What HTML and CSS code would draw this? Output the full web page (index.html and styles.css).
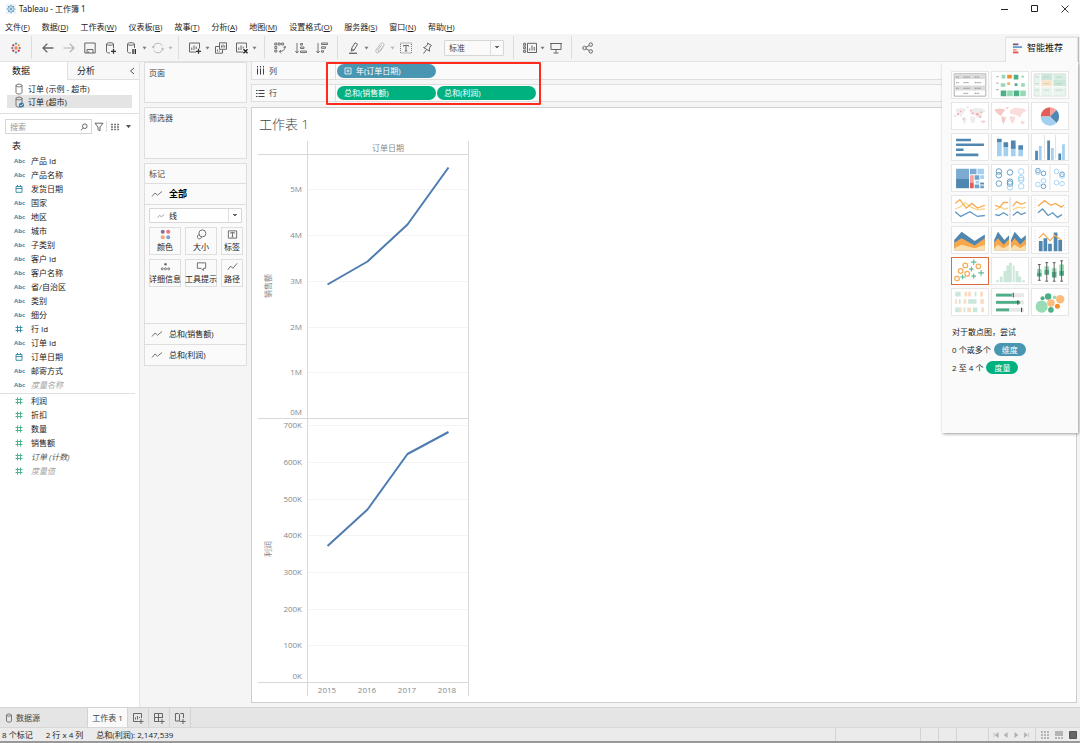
FILE: index.html
```html
<!DOCTYPE html>
<html lang="zh-CN">
<head>
<meta charset="utf-8">
<title>Tableau - 工作簿 1</title>
<link rel="stylesheet" href="styles.css">
</head>
<body>
<svg class="defs" aria-hidden="true">
  <symbol id="logo" viewBox="0 0 12 12"><path d="M6 4v4M4 6h4" stroke="#e8762c" stroke-width="1.2"/><path d="M6 .5v2.4M4.8 1.7h2.4" stroke="#5b879b"/><path d="M6 9.100v2.400M4.800 10.300h2.400" stroke="#5b879b"/><path d="M1.300 6h2M2.300 5v2" stroke="#5b6591"/><path d="M8.700 6h2M9.700 5v2" stroke="#5b6591"/><path d="M3.300 2.200v2.200M2.200 3.300h2.200M8.700 7.600v2.200M7.600 8.700h2.200" stroke="#c72035"/><path d="M8.700 2.200v2.200M7.600 3.300h2.200" stroke="#eb912c"/><path d="M3.300 7.600v2.200M2.200 8.700h2.200" stroke="#c72035"/></symbol>
  <symbol id="caret" viewBox="0 0 5 4"><path d="M.5.700h4L2.500 3.400z" fill="currentColor"/></symbol>
  <symbol id="db" viewBox="0 0 10 12"><path d="M2 2.500v7c0 2 6 2 6 0v-7M2 2.500c0-1.800 6-1.800 6 0s-6 1.800-6 0" fill="none" stroke="currentColor" stroke-width=".8"/></symbol>
  <symbol id="hash" viewBox="0 0 10 10"><path d="M3.500 1.500v7M6.500 1.500v7M1.500 3.500h7M1.500 6.500h7" stroke="currentColor" fill="none" stroke-width=".9"/></symbol>
  <symbol id="cal" viewBox="0 0 10 10"><path d="M2 2.500h6v5.800H2zM2 4.500h6M3.500 1v2M6.500 1v2" stroke="currentColor" fill="none" stroke-width=".9"/></symbol>
  <symbol id="line" viewBox="0 0 12 8"><path d="M1 6.500l3-3.500 2.500 2.200L11 1.500" stroke="currentColor" fill="none"/></symbol>
</svg>

<header class="titlebar">
  <svg class="applogo" viewBox="0 0 12 12"><rect width="12" height="12" fill="#eaf3f9"/><path d="M6 1v10M1 6h10M3.500 2.500v2M8.500 2.500v2M3.500 7.500v2M8.500 7.500v2M2.500 3.500h2M7.500 3.500h2M2.500 8.500h2M7.500 8.500h2" stroke="#2f7ba5" stroke-width="1" fill="none"/><circle cx="6" cy="6" r="2.200" fill="none" stroke="#eaf3f9" stroke-width=".8"/></svg>
  <span class="apptitle">Tableau - 工作簿 1</span>
  <div class="wincontrols">
    <button aria-label="最小化"><svg viewBox="0 0 10 10"><path d="M1 5.500h7" stroke="#222"/></svg></button>
    <button aria-label="最大化"><svg viewBox="0 0 10 10"><path d="M1.500 1.500h6v6h-6z" fill="none" stroke="#222"/></svg></button>
    <button aria-label="关闭"><svg viewBox="0 0 10 10"><path d="M1.500 1.500l7 7M8.500 1.500l-7 7" stroke="#222" stroke-width=".9"/></svg></button>
  </div>
</header>

<nav class="menubar">
  <button>文件(<u>F</u>)</button><button>数据(<u>D</u>)</button><button>工作表(<u>W</u>)</button><button>仪表板(<u>B</u>)</button><button>故事(<u>T</u>)</button><button>分析(<u>A</u>)</button><button>地图(<u>M</u>)</button><button>设置格式(<u>O</u>)</button><button>服务器(<u>S</u>)</button><button>窗口(<u>N</u>)</button><button>帮助(<u>H</u>)</button>
</nav>

<div class="toolbar">
  <button class="tool" aria-label="开始页面"><svg viewBox="0 0 12 12"><use href="#logo"/></svg></button>
  <i class="sep"></i>
  <button class="tool" aria-label="撤消"><svg viewBox="0 0 12 12"><path d="M11.500 6H1M5.300 1.800L1 6l4.300 4.200" stroke-width="1.300"/></svg></button>
  <button class="tool faint" aria-label="重做"><svg viewBox="0 0 12 12"><path d="M.5 6H11M6.700 1.800L11 6l-4.300 4.200" stroke-width="1.200"/></svg></button>
  <button class="tool" aria-label="保存"><svg viewBox="0 0 12 12"><path d="M.8 1h10.400v10H.8zM3 11V7.500h6V11M4.700 11V9.500"/></svg></button>
  <button class="tool" aria-label="新建数据源"><svg viewBox="0 0 12 12"><path d="M5 11c-2 0-3.500-.5-3.500-1.300V2C1.500.3 8.500.3 8.500 2v4M1.500 2c0 1.600 7 1.600 7 0"/><path d="M8.500 6.800v5M6 9.300h5" stroke="#333" stroke-width="1.300"/></svg></button>
  <button class="tool" aria-label="暂停自动更新"><svg viewBox="0 0 12 12"><path d="M5 11c-2 0-3.500-.5-3.500-1.300V2C1.500.3 8.500.3 8.500 2v4M1.500 2c0 1.600 7 1.600 7 0"/><path d="M7 7v5M9.300 7v5" stroke="#222" stroke-width="1.300"/></svg></button>
  <svg class="caret"><use href="#caret"/></svg>
  <button class="tool faint" aria-label="刷新"><svg viewBox="0 0 12 12"><path d="M1.300 5.500C1.600 2.800 3.500 1.200 6 1.200c1.800 0 3.300.9 4.100 2.400M10.700 6.500c-.3 2.700-2.200 4.300-4.700 4.300-1.800 0-3.300-.9-4.100-2.400"/><path d="M-.3 4.500h3.200L1.300 6.800zM9.100 7.500h3.200L10.700 5.200z" fill="currentColor" stroke="none"/></svg></button>
  <svg class="caret faint"><use href="#caret"/></svg>
  <i class="sep"></i>
  <button class="tool" aria-label="新建工作表"><svg viewBox="0 0 12 12"><path d="M7 10H.5V1h10v5.500M2.800 8V5.500M5 8V3.500M7.200 7V4.500" /><path d="M9.500 6.800v5M7 9.300h5" stroke="#333" stroke-width="1.300"/></svg></button>
  <svg class="caret"><use href="#caret"/></svg>
  <button class="tool" aria-label="复制"><svg viewBox="0 0 12 12"><path d="M4.500.8h7v6.500h-7zM4 4.500H.5v6.700h7V8M6.500 5.500v-2M8 5.500v-3M9.700 5.500v-2M2.500 9.500v-2M4.500 9.500V8.500"/></svg></button>
  <button class="tool" aria-label="清除工作表"><svg viewBox="0 0 12 12"><path d="M7 10H.5V1h10v5M2.800 8V5.500M5 8V3.500M7.200 6.500v-2"/><path d="M7.500 7.300l4 4M11.500 7.300l-4 4" stroke="#222" stroke-width="1.400"/></svg></button>
  <svg class="caret"><use href="#caret"/></svg>
  <i class="sep wider"></i>
  <button class="tool" aria-label="交换行和列"><svg viewBox="0 0 12 12"><path d="M.8 1h2v2h-2zM4.200 1h2v2h-2zM7.600 1h2v2h-2zM.8 4.500h2v2h-2zM.8 8h2v2h-2zM11 4.500c0 3.500-2 5-5.500 5M9.500 6L11 4.200 12 6M7 8L5.300 9.500 7 11.300" stroke-width=".9"/></svg></button>
  <button class="tool" aria-label="升序排序"><svg viewBox="0 0 12 12"><path d="M2 1v10M.3 9L2 11l1.700-2M5.500 1.500h2v1.500h-2zM5.500 5h3.500v1.500H5.500zM5.500 9h6v1.500h-6z" stroke-width=".9"/></svg></button>
  <button class="tool" aria-label="降序排序"><svg viewBox="0 0 12 12"><path d="M2 1v10M.3 9L2 11l1.700-2M5.500 1h6.200v1.500H5.500zM5.500 4.800h4v1.500h-4zM5.500 8.700h2v1.500h-2z" stroke-width=".9"/></svg></button>
  <i class="sep"></i>
  <button class="tool" aria-label="突出显示"><svg viewBox="0 0 12 12"><path d="M3.500 6.500L7 .8l2.500 1.400L6 8.200 3.300 9.200zM3.500 6.500L6 8.200"/><path d="M1 11.300h8" stroke-width="1.300"/></svg></button>
  <svg class="caret"><use href="#caret"/></svg>
  <button class="tool faint" aria-label="组成员"><svg viewBox="0 0 12 12"><path d="M9.300 4.500L5.500 9.800C3.500 12 .7 10 2.200 7.700L6.500 2C8-.3 11 1.500 9.700 3.800L5.800 9C4.800 10 3.300 9 4 7.800L7.500 3.200"/></svg></button>
  <svg class="caret faint"><use href="#caret"/></svg>
  <button class="tool" aria-label="显示标记标签"><svg viewBox="0 0 12 12"><path d="M.5 1h11v10H.5z" stroke-dasharray="1 1" stroke-width=".9"/><path d="M3.500 4.500V3.500h5v1M6 3.500V9M4.800 9h2.400"/></svg></button>
  <button class="tool" aria-label="固定轴"><svg viewBox="0 0 12 12"><path d="M6.500 1l4 2.500-1 .5-1.300 3 .5 2.200L2.500 5.500l2-.5L7 2zM5.500 7.500L2.500 11.500"/></svg></button>
  <select class="fit" aria-label="适合"><option>标准</option></select>
  <i class="sep"></i>
  <button class="tool" aria-label="显示/隐藏功能区"><svg class="wide" viewBox="0 0 14 12"><path d="M.6 1.300h2v2h-2zM.6 4.800h2v2h-2zM.6 8.300h2v2h-2zM4.500 1.300h9v9.200h-9zM6.700 8.500V6.500M9 8.500v-5M11.300 8.500V5" stroke-width="1"/></svg></button>
  <svg class="caret"><use href="#caret"/></svg>
  <button class="tool" aria-label="演示模式"><svg viewBox="0 0 12 12"><path d="M0 1.500h12M1 1.500v6h10v-6M6 7.500v3.300M3.500 11h5"/></svg></button>
  <i class="sep"></i>
  <button class="tool" aria-label="共享"><svg viewBox="0 0 12 12"><circle cx="2.500" cy="6" r="1.700"/><circle cx="8.800" cy="2.600" r="1.700"/><circle cx="8.800" cy="9.400" r="1.700"/><path d="M4 5.200l3.300-1.700M4 6.800l3.300 1.700"/></svg></button>
  <button class="showme-tab"><svg viewBox="0 0 12 12"><path d="M1 1.500h6" stroke="#77607f" stroke-width="2"/><path d="M1 4.500h10" stroke="#6a9bd1" stroke-width="2"/><path d="M1 7.500h4" stroke="#f29b74" stroke-width="2"/><path d="M1 10.300h6" stroke="#e8505b" stroke-width="2"/></svg>智能推荐</button>
</div>

<main class="main">
  <aside class="datapane">
    <div class="panetabs"><button class="on">数据</button><button class="off">分析<svg viewBox="0 0 6 8"><path d="M5 1L1.500 4 5 7" fill="none" stroke="#555"/></svg></button></div>
    <div class="sources">
      <button><svg><use href="#db"/></svg>订单 (示例 - 超市)</button>
      <button class="sel"><svg viewBox="0 0 10 12"><use href="#db"/><circle cx="7.500" cy="9" r="2.500" fill="#3a7ca5"/><path d="M6.300 9l1 1 1.500-2" stroke="#fff" fill="none" stroke-width=".7"/></svg>订单 (超市)</button>
    </div>
    <div class="searchrow">
      <label class="search"><input type="text" placeholder="搜索" aria-label="搜索"><svg viewBox="0 0 8 8"><circle cx="4.800" cy="3.200" r="2.300" fill="none" stroke="#555" stroke-width=".9"/><path d="M3.200 5L1 7.300" stroke="#555" stroke-width=".9"/></svg></label>
      <button aria-label="筛选"><svg viewBox="0 0 10 10"><path d="M1 1.200h8L6 5v3.700l-2-1V5z" fill="none" stroke="#555" stroke-width=".9"/></svg></button>
      <i></i>
      <button aria-label="视图"><svg viewBox="0 0 10 10"><path d="M1 2.500h8M1 5h8M1 7.500h8" stroke="#777" stroke-width="1.500" stroke-dasharray="2 1"/></svg></button>
      <svg class="caret"><use href="#caret"/></svg>
    </div>
    <h2>表</h2>
    <ul class="fields dims">
      <li><b>Abc</b>产品 Id</li><li><b>Abc</b>产品名称</li><li><svg><use href="#cal"/></svg>发货日期</li><li><b>Abc</b>国家</li><li><b>Abc</b>地区</li><li><b>Abc</b>城市</li><li><b>Abc</b>子类别</li><li><b>Abc</b>客户 Id</li><li><b>Abc</b>客户名称</li><li><b>Abc</b>省/自治区</li><li><b>Abc</b>类别</li><li><b>Abc</b>细分</li><li><svg><use href="#hash"/></svg>行 Id</li><li><b>Abc</b>订单 Id</li><li><svg><use href="#cal"/></svg>订单日期</li><li><b>Abc</b>邮寄方式</li><li class="gen"><b>Abc</b><em>度量名称</em></li>
    </ul>
    <ul class="fields meas">
      <li><svg><use href="#hash"/></svg>利润</li><li><svg><use href="#hash"/></svg>折扣</li><li><svg><use href="#hash"/></svg>数量</li><li><svg><use href="#hash"/></svg>销售额</li><li><svg><use href="#hash"/></svg><em>订单 (计数)</em></li><li class="gen"><svg><use href="#hash"/></svg><em>度量值</em></li>
    </ul>
  </aside>

  <section class="cards">
    <div class="card pages"><h3>页面</h3></div>
    <div class="card filters"><h3>筛选器</h3></div>
    <div class="card marks">
      <h3>标记</h3>
      <button class="mrow all"><svg><use href="#line"/></svg>全部</button>
      <div class="markbody">
        <label class="marktype"><svg><use href="#line"/></svg><select aria-label="标记类型"><option>线</option></select></label>
        <div class="markgrid">
          <button><svg viewBox="0 0 12 12"><circle cx="3" cy="3" r="2.200" fill="#8a6d9c"/><circle cx="9" cy="3" r="2.200" fill="#f4717c"/><circle cx="3" cy="9" r="2.200" fill="#f5a67d"/><circle cx="9" cy="9" r="2.200" fill="#7fa3cc"/></svg>颜色</button>
          <button><svg viewBox="0 0 12 12"><circle cx="7" cy="4.800" r="3.800"/><path d="M3.600 6C1 6.300.8 10.700 3.500 10.700c2 0 2.600-1.200 2.300-2.400"/></svg>大小</button>
          <button><svg viewBox="0 0 12 12"><path d="M1.500 2h9v8h-9zM4 5V4h4v1M6 4v4.500M5 8.500h2"/></svg>标签</button>
          <button><svg viewBox="0 0 12 12"><circle cx="6" cy="3.500" r="1.300" fill="#666" stroke="none"/><circle cx="2.500" cy="8.500" r="1.100"/><circle cx="6" cy="8.500" r="1.100"/><circle cx="9.500" cy="8.500" r="1.100"/></svg>详细信息</button>
          <button><svg viewBox="0 0 12 12"><path d="M1.500 2h9v6H8v2.500L5.500 8h-4z"/></svg>工具提示</button>
          <button><svg viewBox="0 0 12 12"><path d="M1 9.500l3-4L6.500 8 11 2.500"/></svg>路径</button>
        </div>
      </div>
      <button class="mrow"><svg><use href="#line"/></svg>总和(销售额)</button>
      <button class="mrow"><svg><use href="#line"/></svg>总和(利润)</button>
    </div>
  </section>

  <section class="work">
    <div class="shelves">
      <div class="shelf"><div class="shelfname"><svg viewBox="0 0 9 9"><path d="M1.500 0v1.500M4.500 0v1.500M7.500 0v1.500M1.500 2.500v6M4.500 2.500v6M7.500 2.500v6" stroke="#444"/></svg>列</div><button class="pill blue"><svg viewBox="0 0 8 8"><path d="M1 1h6v6H1zM4 2.500v3M2.500 4h3" fill="none" stroke="#fff" stroke-width=".8"/></svg>年(订单日期)</button></div>
      <div class="shelf"><div class="shelfname"><svg viewBox="0 0 9 9"><path d="M0 1.500h1.500M0 4.500h1.500M0 7.500h1.500M2.500 1.500h6M2.500 4.500h6M2.500 7.500h6" stroke="#444"/></svg>行</div><button class="pill green">总和(销售额)</button><button class="pill green">总和(利润)</button></div>
      <div class="highlight"></div>
    </div>
    <div class="sheet">
      <h1>工作表 1</h1>
      <svg class="chart" width="212" height="556" viewBox="0 0 212 556" role="img" aria-label="销售额与利润">
        <g class="grid"><path d="M50 48.500h160M50 94.500h160M50 140.500h160M50 186.500h160M50 231.500h160M50 284.500h160M50 321.500h160M50 358.500h160M50 394.500h160M50 431.500h160M50 468.500h160M50 504.500h160"/></g>
        <path class="rule" d="M0 13.500h210M0 277.500h210M0 541.500h210M49.500 0v555M210.500 0v555"/>
        <path class="mark" d="M69.500 143.500L109.500 120.500L149.500 83.500L190.500 26.500"/>
        <path class="mark" d="M69.500 405L109.500 368.500L149.500 313L190.500 291"/>
        <text x="130" y="10" text-anchor="middle">订单日期</text>
        <g text-anchor="end"><text x="44" y="51">5M</text><text x="44" y="97">4M</text><text x="44" y="143">3M</text><text x="44" y="189">2M</text><text x="44" y="234">1M</text><text x="44" y="274">0M</text><text x="44" y="287">700K</text><text x="44" y="324">600K</text><text x="44" y="361">500K</text><text x="44" y="397">400K</text><text x="44" y="434">300K</text><text x="44" y="471">200K</text><text x="44" y="507">100K</text><text x="44" y="538">0K</text></g>
        <g text-anchor="middle"><text x="69" y="552">2015</text><text x="109" y="552">2016</text><text x="149" y="552">2017</text><text x="189" y="552">2018</text><text transform="translate(13 145) rotate(-90)">销售额</text><text transform="translate(13 408) rotate(-90)">利润</text></g>
      </svg>
    </div>
  </section>

  <aside class="showme">
    <div class="thumbs">
      <button aria-label="文本表"><svg viewBox="0 0 38 28"><path d="M2 2h34v24H2z" fill="#fff" stroke="#a8a8a8"/><path d="M2.500 2.500h33v5h-33zM2.500 14.500h33v5.500h-33z" fill="#dcdcdc"/><path d="M4 5.500h3M4 11.500h3M4 17.500h3M12 5.500h7M24 5.500h5M12 11.500h6M24 11.500h7M12 17.500h7M24 17.500h7M12 23h5M24 23h5" stroke="#888" stroke-dasharray="1.500 .5"/></svg></button>
      <button aria-label="热图"><svg viewBox="0 0 38 28"><path d="M4 5h3M4 12h3M4 19h3" stroke="#aaa"/><g fill="#98d9b5"><path d="M10 3h4v4h-4zM31 4h3v2h-3zM9 12h5v4H9zM31 12h4v4h-4zM16 20h6v6h-6zM30 20h6v6h-6z"/></g><g fill="#4caf86"><path d="M23 3h5v5h-5zM24 12h3v3h-3zM9 20h6v6H9zM23 20h6v6h-6z"/></g><path d="M16 3h5v4h-5z" fill="#f28e2b"/><path d="M16 11h3v3h-3z" fill="#f6b26b"/></svg></button>
      <button aria-label="突出显示表"><svg viewBox="0 0 38 28"><path d="M2 2h34v24H2z" fill="#e8f4ee" stroke="#ddd"/><path d="M9 2h13v7H9zM22 8h14v7H22z" fill="#cbe7d9"/><path d="M9 9h13v7H9z" fill="#fde3c8"/><path d="M22 2h14v6H22z" fill="#d8eee3"/><path d="M3 5.500h4M3 12.500h4M3 19.500h4M12 5.500h6M25 5.500h7M12 12.500h6M25 12.500h7M12 19.500h6M25 19.500h8" stroke="#b5c9be" stroke-width=".7"/><path d="M22 2v24M9 2v24M2 16h34" stroke="#fff"/></svg></button>
      <button aria-label="符号地图"><svg viewBox="0 0 38 28"><path d="M3 7l8-2 4 2-4 5-1 3-4-3zM12 15l4 2-3 6-2-3zM14 4l4-1-1 4zM19 8l6-3 8 1 3 3-4 2-1 4-4 1-3-3-5-1zM20 14l5 1-1 6-3 1-2-5zM31 18l4 1-1 3-4-1z" fill="#eeecec"/><g fill="#f2b0b0"><circle cx="6" cy="12" r="1.200"/><circle cx="9" cy="9" r="1"/><circle cx="12" cy="17" r="1"/><circle cx="20" cy="8" r="1"/><circle cx="22" cy="11" r="1"/><circle cx="27" cy="12" r="1.500"/><circle cx="31" cy="10" r="1"/><circle cx="30" cy="15" r="1.200"/><circle cx="34" cy="20" r="1"/><circle cx="3" cy="14" r=".8"/></g></svg></button>
      <button aria-label="地图"><svg viewBox="0 0 38 28"><path d="M2 7l6-1 6 1-3 4-2 3-4-3zM10 14l5 2-3 7-2-4zM14 5l4-1-2 3z" fill="#f6c9c9"/><path d="M19 8l5-3 9 1 4 2-5 3-2 5-4-3-4-1-3-1zM19 14l6 1-2 6-2 1-2-5zM31 19l4 1-1 3-4-1z" fill="#fadcdc"/></svg></button>
      <button aria-label="饼图"><svg viewBox="0 0 38 28"><path d="M19 14.500V4.500A10 10 0 0 0 9 14.500z" fill="#e15d57"/><path d="M19 14.500V4.500A10 10 0 0 1 26 7.500z" fill="#f7a29e"/><path d="M19 14.500L26 7.500A10 10 0 0 1 26 21.500z" fill="#4f87b0"/><path d="M19 14.500l7 7A10 10 0 0 1 9 14.500z" fill="#a3d0f0"/></svg></button>
      <button aria-label="水平条"><svg viewBox="0 0 38 28"><path d="M4 6.500h16M4 11.500h30M4 17h8M4 22.500h24" stroke="#4f87b0" stroke-width="2.800"/></svg></button>
      <button aria-label="堆叠条"><svg viewBox="0 0 38 28"><path d="M5 9h5v15H5zM12 14h5v10h-5zM20 12h5v12h-5zM28 17h5v7h-5z" fill="#a3d0f0"/><path d="M5 5h5v4H5zM12 9h5v5h-5zM20 7h5v9h-5zM28 12h5v5h-5z" fill="#4f87b0"/></svg></button>
      <button aria-label="并排条"><svg viewBox="0 0 38 28"><path d="M13 1v26M25 1v26" stroke="#ddd"/><path d="M3 18h3v10H3zM16 7h3v21h-3zM28 21h3v7h-3z" fill="#4f87b0"/><path d="M7 13h3v15H7zM20 15h3v13h-3zM32 11h3v17h-3z" fill="#a3d0f0"/></svg></button>
      <button aria-label="树状图"><svg viewBox="0 0 38 28"><path d="M4 4h14v11H4zM19 4h7v6h-7z" fill="#7cabd1"/><path d="M4 15h14v10H4z" fill="#4f87b0"/><path d="M27 4h7v6h-7zM30 11h4v4h-4zM25 17h4v3h-4z" fill="#a3d0f0"/><path d="M19 11h4v8h-4z" fill="#f7a29e"/><path d="M19 19h4v6h-4z" fill="#e15d57"/><path d="M24 11h5v5h-5zM24 21h5v4h-5zM30 22h4v3h-4z" fill="#6fa3cc"/><path d="M30 19h4v2h-4z" fill="#4f87b0"/></svg></button>
      <button aria-label="圆视图"><svg viewBox="0 0 38 28" fill="none"><g stroke="#5f97bf"><circle cx="7" cy="7" r="3"/><circle cx="7" cy="11" r="3"/><circle cx="7" cy="20" r="3"/><circle cx="19" cy="8" r="3"/><circle cx="19" cy="18" r="3"/><circle cx="19" cy="20" r="3"/></g><g stroke="#a3d0f0"><circle cx="31" cy="7" r="3"/><circle cx="31" cy="14" r="3"/><circle cx="31" cy="16" r="3"/><circle cx="31" cy="23" r="3"/><circle cx="19" cy="24" r="3"/></g></svg></button>
      <button aria-label="并排圆"><svg viewBox="0 0 38 28" fill="none"><path d="M19 1v26" stroke="#ddd"/><g stroke="#5f97bf"><circle cx="6" cy="6" r="2.500"/><circle cx="12" cy="9" r="2.500"/><circle cx="12" cy="23" r="2.500"/><circle cx="32" cy="10" r="2.500"/></g><g stroke="#a3d0f0"><circle cx="6" cy="8" r="2.500"/><circle cx="6" cy="21" r="2.500"/><circle cx="12" cy="17" r="2.500"/><circle cx="26" cy="7" r="2.500"/><circle cx="26" cy="19" r="2.500"/><circle cx="32" cy="12" r="2.500"/><circle cx="32" cy="20" r="2.500"/></g></svg></button>
      <button aria-label="线(连续)"><svg viewBox="0 0 38 28" class="ln"><path d="M3 14l5-2 6-5 6 5 7 3 8-1" stroke="#fbd58a"/><path d="M3 8l5-4 7 9 6-5 6 5 8-3" stroke="#f8ac55"/><path d="M3 17l6 5 10-5 8 5 8-1" stroke="#5f97bf"/></svg></button>
      <button aria-label="线(离散)"><svg viewBox="0 0 38 28" class="ln"><path d="M19 1v26" stroke="#ddd"/><path d="M3 15l6-3 4 2 4-1M22 15l6-3 4 1 4-1" stroke="#fbd58a"/><path d="M3 10l5 2 4-5h5M22 11l4-5 5 3 5-2" stroke="#f8ac55"/><path d="M3 20l4 1 5-3 5 3M22 21l5-4 4 3 5-2" stroke="#5f97bf"/></svg></button>
      <button aria-label="双线"><svg viewBox="0 0 38 28" class="ln"><path d="M3 3v22M35 3v22" stroke="#ccc" stroke-dasharray="1 2" stroke-width=".8"/><path d="M6 11l7-6 7 5 5-2 6 4 3-2" stroke="#f8ac55"/><path d="M6 18l5-4 6 7 5-3 5 5 5-3" stroke="#5f97bf"/></svg></button>
      <button aria-label="面积图(连续)"><svg viewBox="0 0 38 28"><path d="M2 14l8-9 14 10 11-7v17H2z" fill="#4f87b0"/><path d="M2 17l8-5 14 8 11-8v13H2z" fill="#f8a84a"/><path d="M2 23l8-4 14 4 11-4v6H2z" fill="#fadfae"/></svg></button>
      <button aria-label="面积图(离散)"><svg viewBox="0 0 38 28"><path d="M2 14l4-9 7 9 5-5v16H2zM20 14l4-9 7 8 5-4v16H20z" fill="#4f87b0"/><path d="M2 17l4-5 6 7 6-6v12H2zM20 17l4-5 6 7 6-6v12H20z" fill="#f8a84a"/><path d="M2 23l4-4 6 4 6-4v6H2zM20 23l4-4 6 4 6-4v6H20z" fill="#fadfae"/><path d="M19 1v26" stroke="#eee"/></svg></button>
      <button aria-label="双组合"><svg viewBox="0 0 38 28"><path d="M3 3v22M35 3v22" stroke="#ccc" stroke-dasharray="1 2"/><path d="M7 15h4v11H7zM12 12h4v14h-4zM17 18h4v8h-4zM23 6h4v20h-4zM28 14h4v12h-4z" fill="#4f87b0"/><path d="M7 12l5-5 7 8 5-6 7 5" stroke="#f8ac55" stroke-width="1.300" fill="none"/></svg></button>
      <button class="picked" aria-label="散点图"><svg viewBox="0 0 38 28" fill="none"><g stroke="#f8ac55" stroke-width="1.300"><circle cx="5" cy="22" r="2.500"/><circle cx="9" cy="14" r="2.500"/><circle cx="14" cy="8" r="2.500"/><circle cx="16" cy="17" r="2.500"/><circle cx="28" cy="9" r="2.500"/></g><path d="M23 1.500v6M20 4.500h6M20.500 9.500v5M18 12h5M11 18v5M8.500 20.500h6M23 17v5M20.500 19.500h5M31 13v6M28 16h6" stroke="#5cbb96" stroke-width="1.200"/></svg></button>
      <button aria-label="直方图"><svg viewBox="0 0 38 28"><path d="M4 24h3v2H4zM8 20h3v6H8zM12 14h3v12h-3zM15 8h3v18h-3zM18 5h3v21h-3zM22 8h2v18h-2zM25 14h3v12h-3zM28 20h3v6h-3zM32 24h3v2h-3z" fill="#cbe7da"/></svg></button>
      <button aria-label="盒须图"><svg viewBox="0 0 38 28"><path d="M5 12h5v4H5zM13 9h5v4h-5zM21 11h5v4h-5zM29 7h5v7h-5z" fill="#98d9b5"/><path d="M5 16h5v4H5zM13 13h5v5h-5zM21 15h5v6h-5zM29 14h5v5h-5z" fill="#4caf86"/><path d="M7.500 7v17M15.500 5v20M23.500 5v20M31.500 3v22M6 7h3M6 24h3M14 5h3M14 25h3M22 5h3M22 25h3M30 3h3M30 25h3" stroke="#555"/></svg></button>
      <button aria-label="甘特图"><svg viewBox="0 0 38 28"><g fill="#cbe7da"><path d="M3 3h6v5H3zM24 3h2v5h-2zM7 11h2v5H7zM17 11h9v5h-9zM3 20h5v5H3zM12 20h2v5h-2zM22 20h5v5h-5z"/></g><g fill="#fbdcc3"><path d="M13 3h3v5h-3zM17 3h3v5h-3zM30 3h3v5h-3zM3 11h2v5H3zM12 11h3v5h-3zM30 11h4v5h-4zM8 20h2v5H8zM16 20h4v5h-4zM31 20h3v5h-3z"/></g></svg></button>
      <button aria-label="靶心图"><svg viewBox="0 0 38 28"><path d="M4 6.500h30M4 14.500h30M4 22.500h30" stroke="#e8e8e8" stroke-width="4"/><path d="M4 6.500h17M4 14.500h26M4 22.500h14" stroke="#4caf86" stroke-width="3"/><path d="M22.500 4v5M27.500 12v5M31.500 20v5" stroke="#333"/></svg></button>
      <button aria-label="填充气泡图"><svg viewBox="0 0 38 28"><circle cx="10" cy="19" r="6.500" fill="#98dbb5"/><circle cx="17" cy="8" r="3.500" fill="#4caf86"/><circle cx="11" cy="10" r="2.200" fill="#4caf86"/><circle cx="24" cy="9" r="2" fill="#98dbb5"/><circle cx="30" cy="11" r="4.500" fill="#fdbc7b"/><circle cx="20" cy="15" r="4" fill="#fdbc7b"/><circle cx="27" cy="18.500" r="2.700" fill="#f28e2b"/><circle cx="20" cy="22.500" r="3" fill="#4caf86"/></svg></button>
    </div>
    <div class="hint">
      <p>对于散点图，尝试</p>
      <p>0 个或多个 <span class="tag blue">维度</span></p>
      <p>2 至 4 个 <span class="tag green">度量</span></p>
    </div>
  </aside>
</main>

<nav class="sheettabs">
  <button class="ds"><svg><use href="#db"/></svg>数据源</button>
  <button class="on">工作表 1</button>
  <button class="add" aria-label="新建工作表"><svg viewBox="0 0 12 12"><path d="M6.500 9.500H1.500V1.500h8V6M3.500 7.500V5.500M5.500 7.500V4M7.500 6V5M9 7v5M6.500 9.500h5"/></svg></button>
  <button class="add" aria-label="新建仪表板"><svg viewBox="0 0 12 12"><path d="M6.500 9.500H1.500V1.500h8V6M5.500 1.500v8M1.500 5.500h8M9 7v5M6.500 9.500h5"/></svg></button>
  <button class="add" aria-label="新建故事"><svg viewBox="0 0 12 12"><path d="M6.500 9.500L5.500 9H1.500V1.500h3l1 1 1-1h3V6M5.500 2.500V9M9 7v5M6.500 9.500h5"/></svg></button>
</nav>

<footer class="status">
  <span>8 个标记</span><span>2 行 x 4 列</span><span>总和(利润): 2,147,539</span>
  <div class="cells">
    <i class="c1"></i><i class="c2"></i><i class="c2"></i><i class="c3"></i>
    <div class="pager"><svg viewBox="0 0 40 8"><path d="M1 1.500v5M5.500 1.500v5L2.200 4zM15 1.500v5L11.700 4zM23 1.500v5L26.300 4zM33 1.500v5L36.300 4zM37.500 1.500v5" fill="#b0b0b0" stroke="#b0b0b0" stroke-width=".6"/></svg></div>
    <div class="views"><svg viewBox="0 0 38 10"><path d="M1 2h8M1 5h8M1 8h8" stroke="#b5b5b5" stroke-width="2" stroke-dasharray="2 1"/><path d="M15 1h8v5h-8z" fill="#b5b5b5"/><path d="M15 8h8" stroke="#b5b5b5" stroke-width="2" stroke-dasharray="2 1"/><path d="M29.500 1.500h7v7h-7z" fill="#666" stroke="#555"/></svg></div>
  </div>
</footer>
</body>
</html>
```
FILE: styles.css
```css
* { box-sizing: border-box; }
body {
  margin: 0;
  height: 100vh;
  display: flex;
  flex-direction: column;
  overflow: hidden;
  background: #fff;
  color: #222;
  font: 8px/12px "Open Sans", "Noto Sans CJK SC", sans-serif;
}
button, select, input { font: inherit; color: inherit; }
button { border: 0; padding: 0; background: none; white-space: nowrap; }
h1, h2, h3, p, ul { margin: 0; padding: 0; font-weight: 400; list-style: none; }
svg { display: block; flex: none; }
.defs { position: absolute; width: 0; height: 0; }

.titlebar { display: flex; align-items: center; height: 18px; padding: 0 10px 0 6px; flex: none; font-family: "Noto Sans", "Noto Sans CJK SC", sans-serif; }
.applogo { width: 10px; height: 10px; }
.apptitle { margin-left: 3px; }
.wincontrols { display: flex; gap: 20px; margin-left: auto; }
.wincontrols svg { width: 10px; height: 10px; }

.menubar { display: flex; gap: 12px; height: 16px; padding: 2px 5px 0; flex: none; }
.menubar button { line-height: 14px; }

.toolbar {
  display: flex;
  align-items: center;
  height: 28px;
  flex: none;
  padding: 0 2px 0 5px;
  background: #f5f5f5;
  border-bottom: 1px solid #e2e2e2;
}
.tool { width: 21px; height: 21px; display: grid; place-items: center; color: #666; }
.tool svg { width: 12px; height: 12px; fill: none; stroke: currentColor; }
.tool svg.wide { width: 14px; }
.faint { color: #b5b5b5; }
.caret { width: 5px; height: 4px; color: #777; }
.caret.faint { color: #b5b5b5; }
.sep { width: 1px; height: 23px; margin: 0 5px; background: #dcdcdc; }
.sep.wider { margin: 0 4px 0 7px; }
.fit, .marktype {
  border: 1px solid #d6d6d6;
  border-radius: 1px;
}
.fit, .marktype select {
  appearance: none;
  background:
    linear-gradient(#dedede, #dedede) right 12px center / 1px 100% no-repeat,
    linear-gradient(45deg, transparent 50%, #666 50%) right 6px center / 2px 3px no-repeat,
    linear-gradient(-45deg, transparent 50%, #666 50%) right 4px center / 2px 3px no-repeat;
}
.fit { width: 60px; height: 16px; margin: 0 4px 0 7px; padding: 0 4px; background-color: #fafafa; color: #444; }
.showme-tab {
  display: flex;
  align-items: center;
  gap: 4px;
  align-self: flex-end;
  height: 25px;
  width: 73px;
  margin: 0 0 -1px auto;
  padding: 0 0 4px 6px;
  background: #fafafa;
  border: 1px solid #e2e2e2;
  border-bottom: 0;
  box-shadow: 1px 0 1px #bbb;
  font-size: 9px;
  color: #111;
}
.showme-tab svg { width: 11px; height: 11px; }

.main { position: relative; display: flex; flex: 1; min-height: 0; background: #f5f5f5; }
.datapane { width: 140px; background: #fff; border-right: 1px solid #e4e4e4; }
.panetabs { display: flex; font-size: 9px; }
.panetabs button { height: 18px; text-align: left; }
.panetabs .on { width: 67px; padding-left: 12px; color: #111; }
.panetabs .off {
  flex: 1;
  display: flex;
  align-items: center;
  justify-content: space-between;
  padding: 0 4px 0 9px;
  background: #f8f8f8;
  border: solid #e0e0e0;
  border-width: 0 0 1px 1px;
}
.panetabs svg { width: 6px; height: 8px; }
.sources { padding: 2px 7px 5px; border-bottom: 1px solid #e0e0e0; }
.sources button { display: flex; align-items: center; gap: 4px; width: 125px; height: 13px; padding-left: 7px; }
.sources .sel { background: #e4e4e4; }
.sources svg { width: 10px; height: 12px; color: #555; }
.searchrow { display: flex; align-items: center; padding: 5px 0 0 5px; }
.search { display: flex; align-items: center; width: 87px; height: 15px; border: 1px solid #d6d6d6; margin-right: 2px; }
.search input { width: 74px; border: 0; outline: 0; padding: 0 4px; background: none; }
.search input::placeholder { color: #999; }
.search svg { width: 8px; height: 8px; }
.searchrow button svg { width: 10px; height: 10px; }
.searchrow i { width: 1px; height: 11px; margin: 0 3px 0 2px; background: #ddd; }
.searchrow > .caret { margin-left: 5px; width: 7px; height: 5px; color: #555; }
.datapane h2 { margin: 5px 0 1px; padding-left: 12px; font-size: 9px; line-height: 14px; }
.fields li { display: flex; align-items: center; height: 14px; padding-left: 12px; line-height: 14px; }
.fields b { width: 19px; padding-left: 2px; font-size: 6px; font-weight: 700; color: #3f8aa9; }
.fields svg { width: 10px; height: 10px; margin: 0 7px 0 2px; color: #2e86a7; }
.dims { margin: 0 4px 0 0; padding-bottom: 1px; border-bottom: 1px solid #e0e0e0; }
.meas svg { color: #3fae7f; }
.fields em { color: #555; }
.fields .gen em { color: #a5a5a5; }

.cards { width: 103px; margin: 0 4px; display: flex; flex-direction: column; gap: 4px; }
.card { background: #fafafa; border: 1px solid #dedede; }
.card h3 { padding: 0 4px; font-size: 8px; line-height: 19px; color: #444; }
.pages { height: 41px; }
.filters { height: 52px; }
.mrow {
  display: flex;
  align-items: center;
  gap: 6px;
  width: 100%;
  height: 21px;
  padding-left: 6px;
  border-top: 1px solid #dedede;
}
.mrow svg { width: 12px; height: 8px; color: #777; }
.all { height: 22px; border-bottom: 1px solid #dedede; font-size: 9px; font-weight: 700; color: #000; }
.markbody { height: 118px; padding: 3px 4px; }
.marktype { display: flex; align-items: center; height: 15px; padding-left: 7px; background: #fff; }
.marktype svg { width: 8px; height: 6px; color: #777; }
.marktype select { flex: 1; height: 13px; border: 0; padding: 0 4px; }
.markgrid { display: grid; grid-template-columns: 32px 32px 22px; gap: 4px; margin-top: 4px; }
.markgrid button {
  display: flex;
  flex-direction: column;
  align-items: center;
  justify-content: center;
  gap: 1px;
  height: 28px;
  border: 1px solid #dedede;
}
.markgrid svg { width: 11px; height: 11px; fill: none; stroke: #666; stroke-width: 1; }
.markgrid circle[fill^="#"] { stroke: none; }

.work { flex: 1; min-width: 0; display: flex; flex-direction: column; padding: 0 3px 4px 0; }
.shelves { position: relative; display: flex; flex-direction: column; gap: 4px; margin-bottom: 5px; }
.shelf { display: flex; align-items: center; gap: 1px; height: 18px; background: #fafafa; border: 1px solid #dedede; }
.shelf:first-child { border-top: 0; }
.shelfname { display: flex; align-items: center; gap: 4px; width: 84px; height: 100%; padding-left: 4px; border-right: 1px solid #dedede; color: #444; }
.shelfname svg { width: 9px; height: 9px; }
.pill { display: flex; align-items: center; gap: 4px; width: 99px; height: 14px; padding: 0 7px; border-radius: 7px; color: #fff; }
.pill svg { width: 8px; height: 8px; }
.blue { background: #4996b2; }
.green { background: #00b180; }
.highlight { position: absolute; left: 75px; top: 0; width: 215px; height: 43px; border: 2px solid #ff2a1c; border-radius: 1px; }
.sheet { flex: 1; min-height: 0; padding-left: 6px; background: #fff; border: 1px solid #cfcfcf; }
.sheet h1 { padding-left: 1px; font-size: 13px; line-height: 33px; font-weight: 300; color: #444; }
.chart text { font-size: 8px; fill: #888; }
.grid path { stroke: #f3f3f3; }
.rule { stroke: #d9d9d9; fill: none; }
.mark { stroke: #4e7cb0; stroke-width: 2; fill: none; stroke-linejoin: round; }

.showme {
  position: absolute;
  top: 0;
  right: 2px;
  width: 136px;
  min-height: 371px;
  padding: 9px 9px;
  background: #fafafa;
  box-shadow: 1px 1px 3px #999;
  clip-path: inset(0 -4px -4px -4px);
}
.thumbs { display: grid; grid-template-columns: repeat(3, 38px); gap: 3px 2px; }
.thumbs button { height: 28px; background: #fff; border: 1px solid #e6e6e6; }
.thumbs svg { width: 36px; height: 26px; }
.thumbs .picked { border-color: #dd6b3f; }
.ln { fill: none; stroke-width: 1.4; }
.hint { padding: 9px 1px; line-height: 13px; }
.hint p { display: flex; align-items: center; gap: 3px; margin-bottom: 5px; }
.tag { width: 32px; border-radius: 7px; text-align: center; color: #fff; }

.sheettabs { display: flex; height: 20px; flex: none; background: #e5e5e5; border-top: 1px solid #d3d3d3; }
.sheettabs button { border-right: 1px solid #d3d3d3; color: #444; }
.sheettabs .ds { display: flex; align-items: center; gap: 2px; width: 88px; padding-left: 4px; }
.ds svg { width: 10px; height: 10px; }
.sheettabs .on { width: 40px; background: #fafafa; }
.sheettabs .add { width: 21px; display: grid; place-items: center; }
.add svg { width: 12px; height: 12px; fill: none; stroke: #666; }

.status { display: flex; align-items: center; gap: 13px; height: 16px; flex: none; padding-left: 2px; background: #ebebeb; border-top: 1px solid #d8d8d8; border-bottom: 2px solid #999; }
.cells { display: flex; align-items: center; height: 100%; margin-left: auto; }
.cells > * { height: 100%; border-left: 1px solid #d3d3d3; display: flex; align-items: center; }
.c1 { width: 85px; }
.c2 { width: 18px; }
.c3 { width: 32px; }
.pager { width: 47px; padding-left: 4px; }
.pager svg { width: 38px; height: 8px; }
.views { width: 45px; padding-left: 4px; }
.views svg { width: 38px; height: 10px; }
```
